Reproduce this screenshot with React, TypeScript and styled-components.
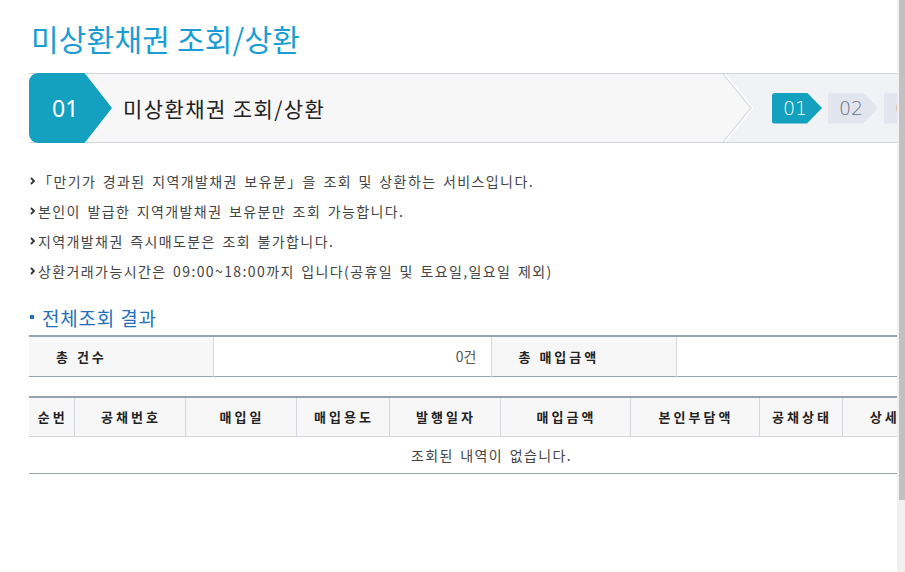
import React from "react";
import styled, { createGlobalStyle } from "styled-components";

const GlobalStyle = createGlobalStyle`
  html, body { margin: 0; padding: 0; background: #fff; overflow: hidden; }
  body { font-family: "Noto Sans CJK KR", "Noto Sans", sans-serif; color: #444; }
  * { box-sizing: border-box; }
`;

const Frame = styled.div`
  display: flex;
  width: 100vw;
  height: 100vh;
  overflow: hidden;
`;

const Viewport = styled.div`
  flex: 1;
  overflow: hidden;
`;

const ScrollTrack = styled.div`
  width: 8px;
  flex: none;
  background: #f0f0f0;
  display: flex;
  justify-content: flex-end;
`;

const ScrollThumb = styled.div`
  width: 6px;
  height: 500px;
  background: #c1c1c1;
`;

const Page = styled.div`
  width: 954px;
  padding: 18px 0 0 29px;
`;

const PageTitle = styled.h1`
  margin: 0 0 15px 2px;
  font-size: 30px;
  line-height: 40px;
  font-weight: 400;
  color: #1a9dd3;
  letter-spacing: 0.2px;
`;

const StepBar = styled.div`
  display: flex;
  align-items: center;
  height: 70px;
  border-top: 1px solid #cfd3d9;
  border-bottom: 1px solid #cfd3d9;
  background: #f7f7f8;
`;

const StepBadge = styled.div`
  flex: none;
  align-self: stretch;
  margin: -1px 0;
  width: 83px;
  background: #14a0bf;
  border-radius: 9px 0 0 9px;
  clip-path: polygon(0 0, 67% 0, 100% 50%, 67% 100%, 0 100%);
  color: #fff;
  font-size: 23px;
  font-family: "Noto Sans", sans-serif;
  display: flex;
  align-items: center;
  padding-left: 23px;
`;

const StepTitle = styled.div`
  flex: 1;
  margin-left: 11px;
  font-size: 21px;
  letter-spacing: 1.4px;
  color: #222;
`;

const StepNav = styled.div`
  flex: none;
  align-self: stretch;
  width: 231px;
  display: flex;
  align-items: center;
  background: #f1f2f5;
`;

const NavChevron = styled.svg`
  flex: none;
  width: 31px;
  height: 68px;
  display: block;
`;

const NavSteps = styled.div`
  display: flex;
  gap: 6px;
  margin-left: 18px;
`;

const NavStep = styled.div<{ $active?: boolean }>`
  width: 50px;
  height: 31px;
  border-radius: 3px;
  clip-path: polygon(0 0, 70% 0, 100% 50%, 70% 100%, 0 100%);
  background: ${(p) => (p.$active ? "#14a0bf" : "#e2e5ee")};
  color: ${(p) => (p.$active ? "#fff" : "#69708c")};
  font-family: "DejaVu Sans", sans-serif;
  font-size: 19px;
  font-weight: 300;
  line-height: 31px;
  padding-left: 11px;
`;

const Notices = styled.ul`
  list-style: none;
  margin: 23px 0 0;
  padding: 0;
`;

const Notice = styled.li`
  display: flex;
  align-items: center;
  height: 30px;
  font-size: 14px;
  letter-spacing: 1.4px;
  word-spacing: 2px;
  color: #444;
`;

const NoticeMark = styled.svg`
  flex: none;
  width: 5px;
  height: 8px;
  margin: 0 3px 0 1px;
`;

const SectionTitle = styled.h2`
  display: flex;
  align-items: center;
  margin: 19px 0 0;
  height: 24px;
  font-size: 19px;
  font-weight: 400;
  color: #2270ba;
  letter-spacing: 0.8px;
`;

const SectionDot = styled.span`
  width: 4px;
  height: 4px;
  background: #2270ba;
  margin: 0 8px 0 1px;
`;

const Table = styled.table<{ $gap?: number }>`
  width: 925px;
  border-collapse: collapse;
  table-layout: fixed;
  margin-top: ${(p) => p.$gap ?? 0}px;
  border-top: 2px solid #99a1ae;
  border-bottom: 1px solid #99a1ae;
`;

const LabelCell = styled.th`
  height: 40px;
  padding: 0 0 0 27px;
  text-align: left;
  background: #f7f7f7;
  font-size: 13px;
  font-weight: 700;
  letter-spacing: 3px;
  color: #222;
  border-left: 1px solid #d4d8de;
  &:first-child { border-left: none; }
`;

const ValueCell = styled.td`
  height: 40px;
  padding: 0 14px 0 0;
  text-align: right;
  font-size: 14px;
  color: #555;
  border-left: 1px solid #d4d8de;
`;

const HeadCell = styled.th`
  height: 40px;
  padding: 0 0 0 3px;
  text-align: center;
  background: #f7f7f7;
  font-size: 13px;
  font-weight: 700;
  letter-spacing: 3px;
  color: #222;
  border-left: 1px solid #d4d8de;
  border-bottom: 1px solid #d4d8de;
  white-space: nowrap;
  overflow: hidden;
  &:first-child { border-left: none; }
`;

const EmptyCell = styled.td`
  height: 37px;
  text-align: center;
  font-size: 14px;
  letter-spacing: 1.4px;
  word-spacing: 2px;
  color: #444;
`;

const notices = [
  "「만기가 경과된 지역개발채권 보유분」을 조회 및 상환하는 서비스입니다.",
  "본인이 발급한 지역개발채권 보유분만 조회 가능합니다.",
  "지역개발채권 즉시매도분은 조회 불가합니다.",
  "상환거래가능시간은 09:00~18:00까지 입니다(공휴일 및 토요일,일요일 제외)",
];

const columns: { label: string; width: number }[] = [
  { label: "순번", width: 45 },
  { label: "공채번호", width: 111 },
  { label: "매입일", width: 111 },
  { label: "매입용도", width: 93 },
  { label: "발행일자", width: 111 },
  { label: "매입금액", width: 130 },
  { label: "본인부담액", width: 129 },
  { label: "공채상태", width: 83 },
  { label: "상세보기", width: 112 },
];

export default function App() {
  return (
    <>
      <GlobalStyle />
      <Frame>
        <Viewport>
          <Page>
            <PageTitle>미상환채권 조회/상환</PageTitle>

            <StepBar>
              <StepBadge>01</StepBadge>
              <StepTitle>미상환채권 조회/상환</StepTitle>
              <StepNav>
                <NavChevron viewBox="0 0 31 68">
                  <polygon points="0,0 1,0 29,34 1,68 0,68" fill="#f7f7f8" />
                  <polyline points="1,0 29,34 1,68" fill="none" stroke="#ffffff" strokeWidth="3" />
                  <polyline points="0,0 28,34 0,68" fill="none" stroke="#d9dce1" strokeWidth="1.3" />
                </NavChevron>
                <NavSteps>
                  <NavStep $active>01</NavStep>
                  <NavStep>02</NavStep>
                  <NavStep>03</NavStep>
                </NavSteps>
              </StepNav>
            </StepBar>

            <Notices>
              {notices.map((n) => (
                <Notice key={n}>
                  <NoticeMark viewBox="0 0 5 8">
                    <polyline points="1,1 4,4 1,7" fill="none" stroke="#333" strokeWidth="1.8" />
                  </NoticeMark>
                  {n}
                </Notice>
              ))}
            </Notices>

            <SectionTitle>
              <SectionDot />
              전체조회 결과
            </SectionTitle>

            <Table $gap={6}>
              <colgroup>
                <col style={{ width: 184 }} />
                <col style={{ width: 278 }} />
                <col style={{ width: 185 }} />
                <col style={{ width: 278 }} />
              </colgroup>
              <tbody>
                <tr>
                  <LabelCell>총 건수</LabelCell>
                  <ValueCell>0건</ValueCell>
                  <LabelCell>총 매입금액</LabelCell>
                  <ValueCell></ValueCell>
                </tr>
              </tbody>
            </Table>

            <Table $gap={19}>
              <colgroup>
                {columns.map((c) => (
                  <col key={c.label} style={{ width: c.width }} />
                ))}
              </colgroup>
              <thead>
                <tr>
                  {columns.map((c) => (
                    <HeadCell key={c.label}>{c.label}</HeadCell>
                  ))}
                </tr>
              </thead>
              <tbody>
                <tr>
                  <EmptyCell colSpan={columns.length}>조회된 내역이 없습니다.</EmptyCell>
                </tr>
              </tbody>
            </Table>
          </Page>
        </Viewport>
        <ScrollTrack>
          <ScrollThumb />
        </ScrollTrack>
      </Frame>
    </>
  );
}
